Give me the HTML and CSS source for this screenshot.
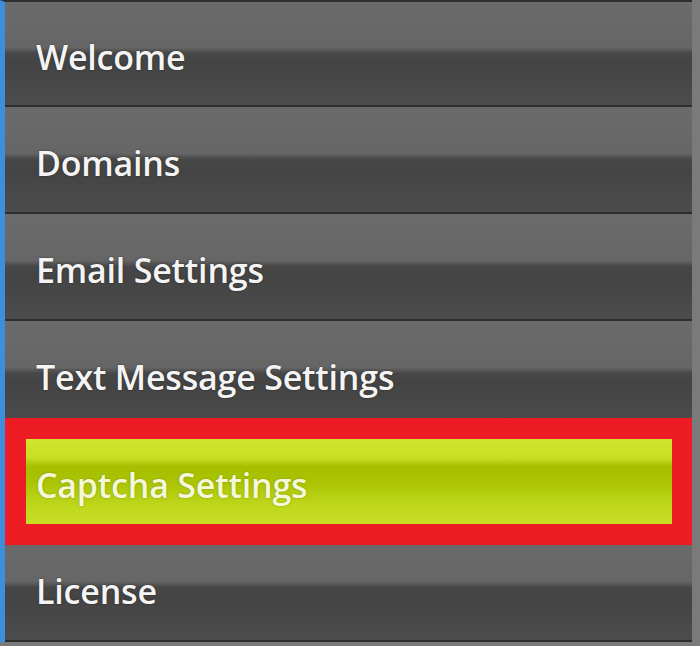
FILE: index.html
```html
<!DOCTYPE html>
<html lang="en">
<head>
    <meta charset="UTF-8">
    <meta name="viewport" content="width=device-width, initial-scale=1.0">
    <title>Settings menu</title>
    <link rel="stylesheet" href="styles.css">
</head>
<body>
    <div class="menu">
        <div class="menu-item">Welcome</div>
        <div class="menu-item">Domains</div>
        <div class="menu-item">Email Settings</div>
        <div class="menu-item">Text Message Settings</div>
        <div class="highlight">
            <div class="menu-item active">Captcha Settings</div>
        </div>
        <div class="menu-item">License</div>
    </div>
</body>
</html>
```

FILE: styles.css
```css
body {
    margin: 0;
    padding: 0;
    background-color: #7a7a7a;
    font-family: "Open Sans", "Noto Sans", sans-serif;
    height: 646px;
    overflow: hidden;
}
.menu {
    width: 687px;
    border-left: 5px solid #3b8fdc;
    border-top: 2px solid #2e2e2e;
    background-color: #4a4a4a;
}
.menu-item {
    height: 99px;
    padding: 6px 0 0 31px;
    display: flex;
    align-items: center;
    border-bottom: 2px solid #2e2e2e;
    color: #f4f4f4;
    font-size: 34px;
    font-weight: 600;
    letter-spacing: -0.2px;
    text-shadow: 0 0 2px rgba(0, 0, 0, 0.5);
    background: linear-gradient(to bottom,
        #6b6b6b 0%, #666 44%, #474747 50%, #444 60%, #4c4c4c 100%);
}
.menu-item:first-child {
    height: 97px;
}
.highlight {
    position: relative;
    z-index: 1;
    margin: -10px 0 -10px 0;
    border: 21px solid #ed1c24;
    border-right-width: 20px;
}
.menu-item.active {
    height: 79px;
    padding-left: 10px;
    border-bottom: none;
    color: #f5f8d8;
    text-shadow: 0 0 2px rgba(80, 90, 0, 0.5);
    background: linear-gradient(to bottom,
        #cfe52e 0%, #c8e024 22%, #a5bf00 32%, #aac404 50%, #bfd81c 80%, #c6de26 100%);
}
```
